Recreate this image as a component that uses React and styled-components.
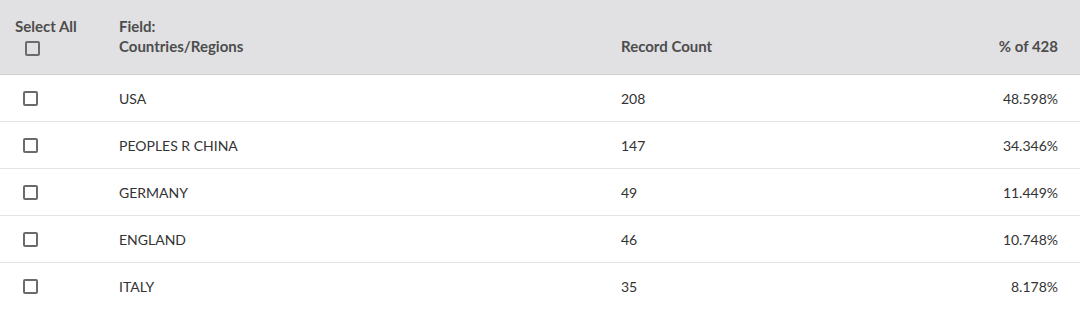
import React from "react";
import styled, { createGlobalStyle } from "styled-components";

const GlobalStyle = createGlobalStyle`
  body {
    margin: 0;
    background: #ffffff;
    font-family: Lato, "Open Sans", sans-serif;
  }
`;

const rows = [
  { name: "USA", count: 208, pct: "48.598%" },
  { name: "PEOPLES R CHINA", count: 147, pct: "34.346%" },
  { name: "GERMANY", count: 49, pct: "11.449%" },
  { name: "ENGLAND", count: 46, pct: "10.748%" },
  { name: "ITALY", count: 35, pct: "8.178%" },
];

function App() {
  return (
    <>
      <GlobalStyle />
      <Table>
        <HeaderRow>
          <HeadCell>
            <span>Select All</span>
            <Checkbox $header />
          </HeadCell>
          <HeadCell>
            <span>Field:</span>
            <span>Countries/Regions</span>
          </HeadCell>
          <HeadCell $bottom>Record Count</HeadCell>
          <HeadCell $bottom $right>% of 428</HeadCell>
        </HeaderRow>
        {rows.map((r) => (
          <Row key={r.name}>
            <Cell>
              <Checkbox />
            </Cell>
            <Cell>{r.name}</Cell>
            <Cell>{r.count}</Cell>
            <Cell $right>{r.pct}</Cell>
          </Row>
        ))}
      </Table>
    </>
  );
}

export default App;

const Table = styled.div`
  width: 1080px;
`;

const HeaderRow = styled.div`
  display: grid;
  grid-template-columns: 104px 502px 1fr 1fr;
  background: #e1e1e3;
  border-bottom: 1px solid #cfcfd1;
  box-sizing: border-box;
  height: 75px;
`;

const HeadCell = styled.div`
  display: flex;
  flex-direction: column;
  justify-content: ${(p) => (p.$bottom ? "flex-end" : "flex-start")};
  align-items: ${(p) => (p.$right ? "flex-end" : "flex-start")};
  padding: ${(p) => (p.$bottom ? "0 22px 18px 15px" : "16px 22px 0 15px")};
  font-size: 15px;
  font-weight: 700;
  color: #4d4d4d;
  line-height: 20px;
`;

const Row = styled.div`
  display: grid;
  grid-template-columns: 104px 502px 1fr 1fr;
  height: 47px;
  box-sizing: border-box;
  border-bottom: 1px solid #e3e3e3;
`;

const Cell = styled.div`
  display: flex;
  align-items: center;
  justify-content: ${(p) => (p.$right ? "flex-end" : "flex-start")};
  padding: 0 22px 0 15px;
  font-size: 14px;
  color: #333333;
`;

const Checkbox = styled.span`
  display: block;
  width: 15px;
  height: 15px;
  box-sizing: border-box;
  border: 2px solid #6b6b6b;
  border-radius: 2px;
  margin-left: ${(p) => (p.$header ? "10px" : "8px")};
  margin-top: ${(p) => (p.$header ? "5px" : "0")};
  background: ${(p) => (p.$header ? "transparent" : "#ffffff")};
`;
